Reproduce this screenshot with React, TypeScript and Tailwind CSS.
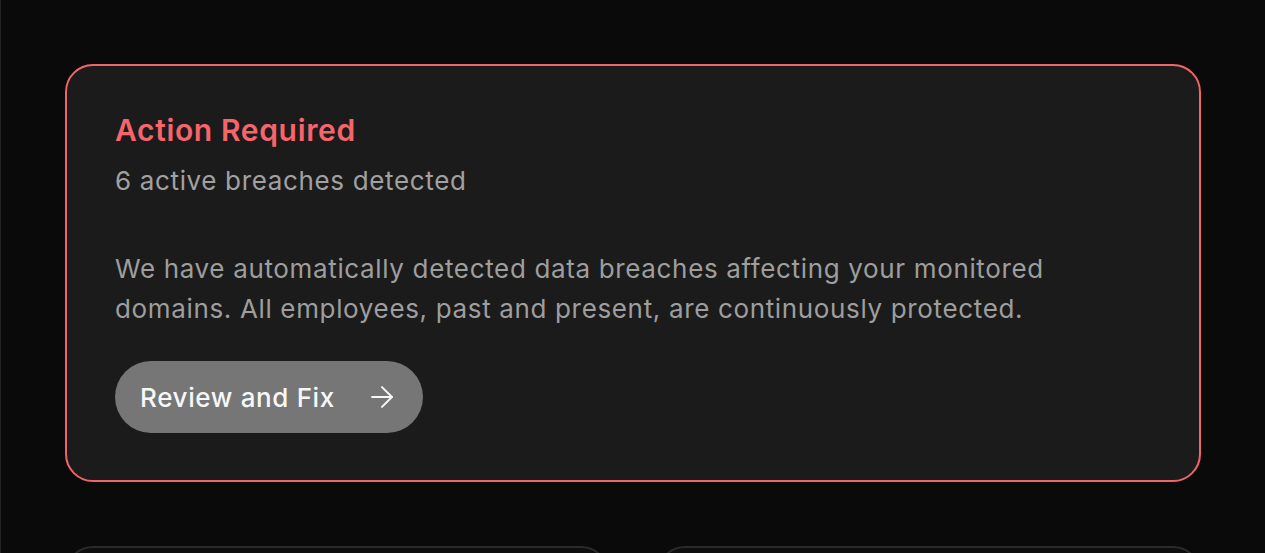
import React from "react";
import { ArrowRight } from "lucide-react";

export default function App() {
  return (
    <div
      className="min-h-[553px] h-[553px] overflow-hidden bg-[#0a0a0a] border-l border-[#232323] pl-16 pr-16 pt-16 flex flex-col gap-[64px]"
      style={{ fontFamily: "Inter, 'Noto Sans', sans-serif" }}
    >
      <div className="border-2 border-[#f26468] rounded-[28px] bg-[#1b1b1b] pl-12 pr-12 pt-[46px] pb-[47px] flex flex-col items-start tracking-[0.65px]">
        <h2 className="text-[30px] leading-[36px] font-semibold text-[#f76469]">Action Required</h2>
        <p className="mt-[17px] text-[26px] leading-[32px] text-[#a1a1a1]">6 active breaches detected</p>
        <p className="mt-[52px] text-[26px] leading-[40px] text-[#9e9e9e] max-w-[1000px]">
          We have automatically detected data breaches affecting your monitored domains. All employees, past and
          present, are continuously protected.
        </p>
        <button className="mt-[32px] h-[72px] rounded-full bg-[#767676] pl-[25px] pr-[24px] flex items-center gap-[30px] text-[26px] font-medium text-[#f7f7f7] tracking-[0.65px]">
          <span>Review and Fix</span>
          <ArrowRight size={34} strokeWidth={1.4} />
        </button>
      </div>
      <div className="grid grid-cols-2 gap-12">
        <div className="h-[120px] rounded-[28px] border-2 border-[#2a2a2a] bg-[#0e0e0e]" />
        <div className="h-[120px] rounded-[28px] border-2 border-[#2a2a2a] bg-[#0e0e0e]" />
      </div>
    </div>
  );
}
